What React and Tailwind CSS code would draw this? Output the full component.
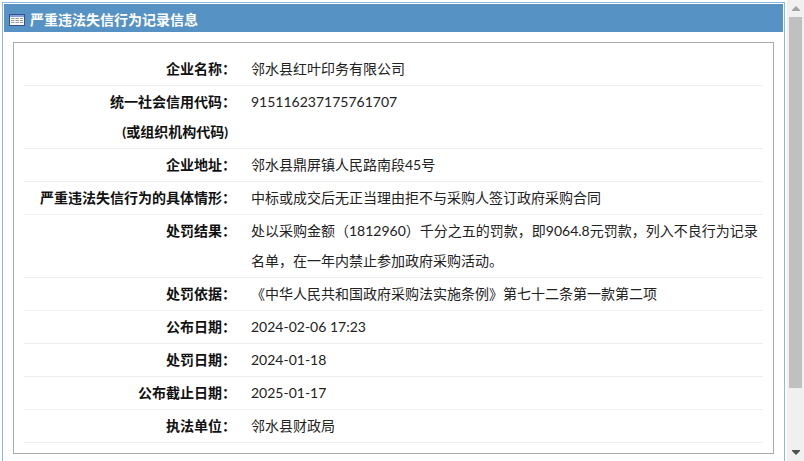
const rows = [
  { label: ["企业名称："], value: "邻水县红叶印务有限公司" },
  { label: ["统一社会信用代码：", "(或组织机构代码)"], value: "915116237175761707" },
  { label: ["企业地址："], value: "邻水县鼎屏镇人民路南段45号" },
  { label: ["严重违法失信行为的具体情形："], value: "中标或成交后无正当理由拒不与采购人签订政府采购合同" },
  {
    label: ["处罚结果："],
    value: "处以采购金额（1812960）千分之五的罚款，即9064.8元罚款，列入不良行为记录名单，在一年内禁止参加政府采购活动。",
  },
  { label: ["处罚依据："], value: "《中华人民共和国政府采购法实施条例》第七十二条第一款第二项" },
  { label: ["公布日期："], value: "2024-02-06 17:23" },
  { label: ["处罚日期："], value: "2024-01-18" },
  { label: ["公布截止日期："], value: "2025-01-17" },
  { label: ["执法单位："], value: "邻水县财政局" },
];

const TableIcon = () => (
  <svg width="16" height="12" viewBox="0 0 16 12" className="mt-[2px] shrink-0">
    <rect x="0" y="0" width="16" height="12" fill="#3c4f86" />
    <rect x="1" y="1" width="14" height="2" fill="#7f9fe6" />
    <rect x="1" y="3" width="14" height="8" fill="#f8f8f8" />
    <path
      d="M2 4.5h3.5M6.5 4.5h3.5M11 4.5h3M2 6.5h3.5M6.5 6.5h3.5M11 6.5h3M2 8.5h3.5M6.5 8.5h3.5M11 8.5h3"
      stroke="#9c9c9c"
      strokeWidth="1"
    />
  </svg>
);

const Scrollbar = () => (
  <div className="flex h-full w-[17px] shrink-0 flex-col items-center bg-[#f0f0f0]">
    <div className="flex h-[17px] w-full items-center justify-center">
      <svg width="8" height="5" viewBox="0 0 8 5">
        <path d="M4 0 L8 4 V5 H0 V4 Z" fill="#a3a3a3" />
      </svg>
    </div>
    <div className="h-[371px] w-[13px] bg-[#c0c0c0]" />
    <div className="flex-1" />
    <div className="flex h-[17px] w-full items-center justify-center">
      <svg width="8" height="5" viewBox="0 0 8 5">
        <path d="M0 0 H8 V1 L4 5 L0 1 Z" fill="#505050" />
      </svg>
    </div>
  </div>
);

export default function App() {
  return (
    <div className="flex h-[461px] w-[804px] overflow-hidden bg-white font-['Lato','Noto_Sans_CJK_SC',sans-serif] text-[14px] text-[#222]">
      <div className="min-w-0 flex-1 pl-[2px] pr-[2px] pt-[2px]">
        <div className="h-[480px] border border-[#8cb6e6] bg-white p-[1px]">
          <div className="flex h-[28px] items-center gap-[5px] bg-[#5792c4] pl-[5px] pt-[2px] font-bold text-white">
            <TableIcon />
            <span>严重违法失信行为记录信息</span>
          </div>
          <div className="ml-[9px] mt-[10px] h-[412px] w-[761px] border border-[#aaaaaa] px-[10px] pt-[10px]">
            {rows.map((row) => (
              <div key={row.label[0]} className="flex border-b border-[#eeeeee] py-[1px] leading-[30px]">
                <div className="w-[212px] shrink-0 text-right font-bold text-[#111]">
                  {row.label.map((line, i) => (
                    <div key={line} className={i > 0 ? "pr-[8px]" : ""}>
                      {line}
                    </div>
                  ))}
                </div>
                <div className="min-w-0 flex-1 pl-[15px]">{row.value}</div>
              </div>
            ))}
          </div>
        </div>
      </div>
      <Scrollbar />
    </div>
  );
}
